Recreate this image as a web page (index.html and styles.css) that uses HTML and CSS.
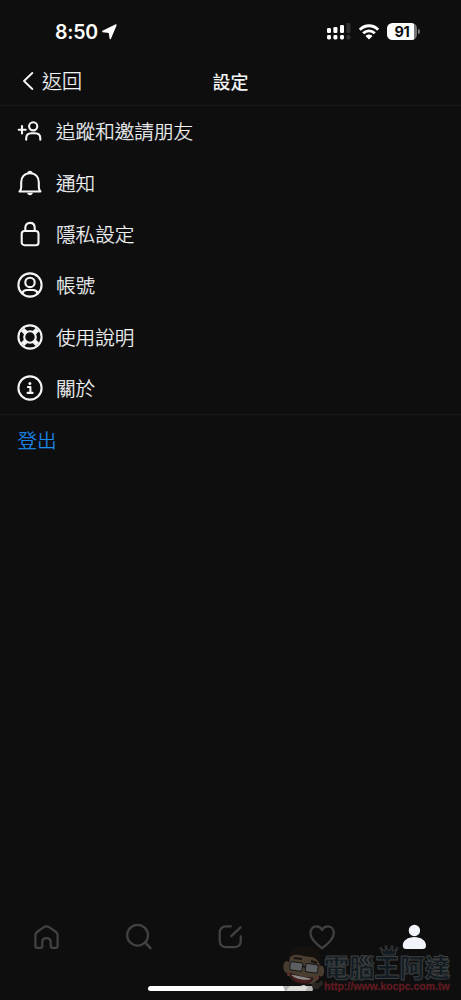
FILE: index.html
```html
<!DOCTYPE html>
<html lang="zh-Hant">
<head>
<meta charset="utf-8">
<title>設定</title>
<link rel="stylesheet" href="styles.css">
</head>
<body>
<div class="screen">
  <div class="status">
    <div class="clock">
      <span class="time">8:50</span>
      <svg width="15" height="16" viewBox="0 0 15 16"><path d="M14 1 8.300 14.600 7.300 8.200.8 7.500Z" fill="#fff" stroke="#fff" stroke-width="1.400" stroke-linejoin="round"/></svg>
    </div>
    <div class="indicators">
      <svg class="signal" width="24" height="17" viewBox="0 0 24 17">
        <g fill="#fff"><rect x="0" y="5" width="4" height="5" rx="1.2"/><rect x="6.4" y="4" width="4" height="6" rx="1.2"/><rect x="13" y="2" width="4" height="8" rx="1.2"/><rect x="0" y="12" width="4" height="4.4" rx="1.4"/><rect x="6.4" y="12" width="4" height="4.4" rx="1.4"/><rect x="13" y="12" width="4" height="4.4" rx="1.4"/></g>
        <g fill="#303030"><rect x="19.4" y="0" width="4" height="10" rx="1.2"/><rect x="19.4" y="12" width="4" height="4.4" rx="1.4"/></g>
      </svg>
      <svg class="wifi" width="22" height="16" viewBox="0 0 22 16" fill="none" stroke="#fff" stroke-width="2.8"><path d="M1.8 5.7C7 .4 15 .4 20.200 5.700M5.200 9.300c3.300-3.300 8.300-3.300 11.600 0"/><path d="M7.500 12.100c2-2 5-2 7 0L11 15.600Z" fill="#fff" stroke="none"/></svg>
      <div class="battery"><span class="level">91</span><span class="tip"></span></div>
    </div>
  </div>

  <header class="header">
    <div class="back">
      <svg width="12" height="20" viewBox="0 0 12 20"><path d="M10.300 2 2 10l8.300 8" fill="none" stroke="#f3f5f7" stroke-width="1.900" stroke-linecap="round" stroke-linejoin="round"/></svg>
      <span>返回</span>
    </div>
    <h1 class="title">設定</h1>
  </header>

  <ul class="menu">
    <li class="row">
      <svg class="icon" viewBox="0 0 26 26"><circle cx="16.200" cy="8.300" r="4.100"/><path d="M9.200 21.700v-1.300c0-3.300 2-5.200 5.200-5.200h3.700c3.200 0 5.200 1.900 5.200 5.200v1.300M5 8v7.400M1.700 11.700h7"/></svg>
      <span>追蹤和邀請朋友</span>
    </li>
    <li class="row">
      <svg class="icon" viewBox="0 0 26 26"><path d="M2.500 21.500h21c-1.200-1-1.700-2.600-1.700-4.600v-4.700c0-5-3-8.900-8.800-8.900s-8.800 3.900-8.800 8.900v4.700c0 2-.5 3.600-1.700 4.600Z"/><path class="solid" d="M10.200 22.800h5.600c0 3.200-5.600 3.200-5.600 0ZM10.300 3.200c.3-3.200 5.100-3.200 5.400 0Z"/></svg>
      <span>通知</span>
    </li>
    <li class="row">
      <svg class="icon" viewBox="0 0 26 26"><rect x="4.700" y="10" width="16.800" height="14.200" rx="2.800"/><path d="M8.300 10V6.800c0-3 1.800-4.900 4.700-4.900s4.700 1.900 4.700 4.900V10"/></svg>
      <span>隱私設定</span>
    </li>
    <li class="row">
      <svg class="icon" viewBox="0 0 26 26"><circle cx="13" cy="13" r="11.600"/><circle cx="13" cy="10.400" r="4.700"/><path d="M5.200 21.400c.8-2.500 2.400-3.400 4.700-3.400h6.200c2.300 0 3.900.9 4.700 3.400"/></svg>
      <span>帳號</span>
    </li>
    <li class="row">
      <svg class="icon" viewBox="0 0 26 26"><circle cx="13" cy="13" r="11.600"/><circle cx="13" cy="13" r="5.800"/><path class="bands" d="m5.600 5.600 3.300 3.300m8.200 8.200 3.300 3.300m0-14.800-3.300 3.300m-8.200 8.200-3.300 3.300"/></svg>
      <span>使用說明</span>
    </li>
    <li class="row">
      <svg class="icon" viewBox="0 0 26 26"><circle cx="13" cy="13" r="11.600"/><circle class="solid" cx="12.900" cy="8.400" r="1.500"/><path d="M10.900 12h2.500v5.900m-2.800 0h5"/></svg>
      <span>關於</span>
    </li>
  </ul>
  <a class="logout">登出</a>

  <nav class="tabs">
    <svg viewBox="0 0 30 30"><path d="M3.400 13.200c0-1.500.5-2.300 1.600-3.200l6.500-4.600c2.200-1.500 3.800-1.500 6 0L24 10c1.100.9 1.600 1.700 1.600 3.200v10.700c0 1.400-.5 1.900-1.900 1.900h-3.100c-1.400 0-1.900-.5-1.900-1.900v-3.500c0-2.600-1.500-4.200-4.200-4.200s-4.200 1.600-4.200 4.200v3.500c0 1.400-.5 1.900-1.900 1.900H5.300c-1.400 0-1.900-.5-1.900-1.900Z"/></svg>
    <svg viewBox="0 0 30 30"><circle cx="13.600" cy="13.200" r="10.400"/><path d="m21 20.400 5.500 5.700" stroke-width="2.600"/></svg>
    <svg viewBox="0 0 30 30"><path d="M15.900 4.300h-4.500c-4.500 0-6.700 2.200-6.700 6.700v7.500c0 4.500 2.200 6.700 6.700 6.700h7.700c4.500 0 6.700-2.200 6.700-6.700v-4.200M16.300 14.200l9.200-8.900"/></svg>
    <svg viewBox="0 0 30 30"><path d="M15.100 26.200C11.100 23.300 3.400 17.500 3.400 11c0-3.900 2.600-6.600 6.200-6.600 2.500 0 4.300 1.300 5.500 3.600 1.200-2.300 3-3.600 5.500-3.600 3.600 0 6.200 2.700 6.200 6.600 0 6.500-7.700 12.300-11.700 15.200Z"/></svg>
    <svg class="active" viewBox="0 0 30 30"><circle cx="15.400" cy="8.500" r="5.700"/><path d="M3.800 23.500c0-5 5.200-8.500 11.600-8.500S27 18.500 27 23.500c0 2.500-1 3.500-3.500 3.500H7.300c-2.500 0-3.500-1-3.500-3.500Z"/></svg>
  </nav>
  <div class="home-bar"></div>

  <div class="watermark">
    <svg class="face" width="43" height="46" viewBox="0 0 43 46">
      <path d="M29 37h6l4-3 1 4-5 5h-7Z" fill="#2c2722"/>
      <path d="m0 40h29l1 4-2 1H2Z" fill="#b6b5b2"/>
      <path d="M3 45 7 40h10l4-1 4 2-3 4Z" fill="#dddcd6"/>
      <ellipse cx="3.800" cy="21" rx="3.500" ry="6" fill="#483c30"/><ellipse cx="38" cy="25" rx="3.200" ry="5.500" fill="#483c30"/>
      <path d="M7 10C12 3 32 4 37 14l-1 17c-2 6-8 8-15 7C10 37 5 31 5 23Z" fill="#4a3e31"/>
      <path d="M7 11c-2-6 2-9 8-10 8-2 23 0 23 9l-1 9c-2-5-5-8-9-8-7 0-13-3-17-2Z" fill="#14110f"/>
      <path d="m11 12 8 1m9 2 6 2" stroke="#15120f" stroke-width="2"/>
      <g fill="#5c5e61" stroke="#171717" stroke-width="1"><rect x="7" y="16" width="12.500" height="8.500" rx="2" transform="rotate(7 12 20)"/><rect x="22.500" y="18" width="12.500" height="8.500" rx="2" transform="rotate(7 28 22)"/></g>
      <path d="m19 20 3 1" stroke="#171717" stroke-width="1.500"/>
      <circle cx="6" cy="28" r="2.200" fill="#5b342c"/><circle cx="34" cy="32" r="2" fill="#5b342c"/>
      <path d="M7 27c6 3 14 5 23 5-2 6-8 7-14 5-5-1-8-5-9-10Z" fill="#471c1c" stroke="#1a1110"/><path d="m8 28.500 20 4-1.500 1c-7 1-14-1-17-3.500Z" fill="#8a8985"/>
    </svg>
    <div class="brand">
      <svg class="crown" width="20" height="11" viewBox="0 0 20 11"><path d="m4 10-2-6 4 2 1-4 3 4 3-4 1 4 4-2-2 6Z" fill="#121b22" stroke="#3b3d3e"/><g fill="#161b1e" stroke="#3b3d3e" stroke-width=".8"><circle cx="1.700" cy="3.500" r="1.200"/><circle cx="6.900" cy="1.800" r="1.200"/><circle cx="13" cy="1.800" r="1.200"/><circle cx="18.200" cy="3.500" r="1.200"/></g></svg>
      <div class="name">電腦王阿達</div>
      <div class="url">http://www.kocpc.com.tw</div>
    </div>
  </div>
</div>
</body>
</html>
```
FILE: styles.css
```css
* { box-sizing: border-box; }
body { margin: 0; background: #0e0e0e; }
.screen {
  position: relative;
  width: 461px;
  height: 1000px;
  display: flex;
  flex-direction: column;
  overflow: hidden;
  background: #0e0e0e;
  color: #f3f5f7;
  font-family: "Noto Sans CJK TC", sans-serif;
  font-size: 19.6px;
  font-weight: 300;
}
svg { display: block; flex: none; }
.status {
  height: 57px;
  padding: 6px 41px 0 55px;
  display: flex;
  justify-content: space-between;
  align-items: center;
}
.clock { display: flex; align-items: center; gap: 4px; }
.time { font: 600 19.5px/24px Inter, sans-serif; letter-spacing: -.25px; color: #fff; }
.indicators { display: flex; align-items: center; gap: 8px; }
.signal { margin-right: -1px; }
.wifi { margin-right: -1px; }
.battery { display: flex; align-items: center; gap: 1px; }
.level {
  width: 30px;
  height: 17px;
  border-radius: 5.5px;
  background: linear-gradient(to right, #fff 90%, #777 90%);
  color: #0e0e0e;
  font: 700 14.5px/17px Inter, sans-serif;
  letter-spacing: -.4px;
  text-align: center;
}
.tip { width: 2px; height: 5px; border-radius: 0 2px 2px 0; background: #777; }
.header {
  height: 49px;
  padding: 0 22px 1px;
  display: grid;
  grid-template-columns: 1fr auto 1fr;
  align-items: center;
  border-bottom: 1px solid #191919;
}
.back { display: flex; align-items: center; gap: 8px; font-size: 20px; line-height: 30px; }
.title { margin: 0; font-size: 18px; line-height: 28px; font-weight: 500; }
.back span, .row span, .logout { -webkit-text-stroke: .25px currentColor; }
.menu { margin: 0; padding: 0 0 0 17.4px; list-style: none; border-bottom: 1px solid #191919; }
.row { height: 51.4px; padding-bottom: 1px; display: flex; align-items: center; gap: 12.6px; line-height: 30px; }
.icon {
  width: 26px;
  height: 26px;
  fill: none;
  stroke: #f3f5f7;
  stroke-width: 2.1;
  stroke-linecap: round;
  stroke-linejoin: round;
}
.solid { fill: #f3f5f7; stroke: none; }
.bands { stroke-width: 4.8; stroke-linecap: butt; }
.logout { padding: 10px 17.5px; line-height: 30px; color: #1d8df2; }
.tabs {
  margin-top: auto;
  padding: 0 1px;
  height: 30px;
  display: grid;
  grid-template-columns: repeat(5, 1fr);
  justify-items: center;
}
.tabs svg {
  width: 30px;
  height: 30px;
  fill: none;
  stroke: #414141;
  stroke-width: 2.3;
  stroke-linecap: round;
  stroke-linejoin: round;
}
.tabs .active { fill: #f0f4f8; stroke: none; }
.home-bar { width: 165px; height: 5px; margin: 34px auto 9px; border-radius: 3px; background: #fff; }
.watermark { position: absolute; left: 283px; top: 946px; display: flex; }
.brand { position: relative; padding-top: 7px; margin-left: -2px; }
.crown { position: absolute; left: 55px; top: -1px; }
.name {
  height: 26px;
  font-weight: 900;
  font-size: 25.2px;
  line-height: 26px;
  white-space: nowrap;
  color: #121b22;
  -webkit-text-stroke: 1px #3b3d3e;
}
.url {
  font: 700 10.5px/14px "Liberation Sans", sans-serif;
  white-space: nowrap;
  color: #6b141d;
  -webkit-text-stroke: .3px #4a2429;
}
```
